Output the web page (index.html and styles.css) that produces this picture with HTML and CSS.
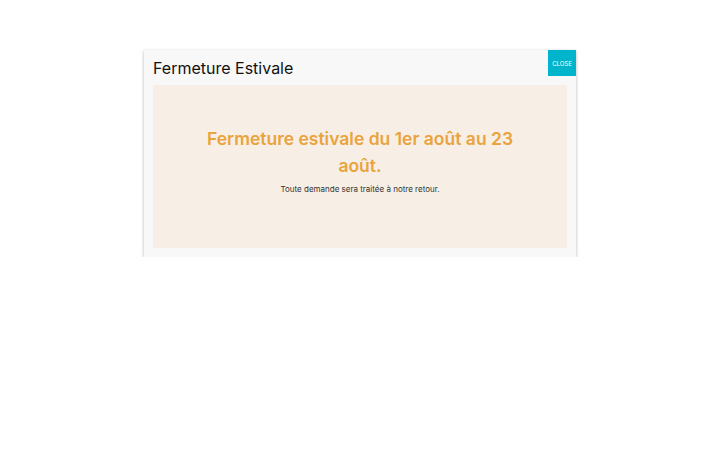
FILE: index.html
```html
<!DOCTYPE html>
<html lang="fr">
<head>
  <meta charset="UTF-8">
  <meta name="viewport" content="width=device-width, initial-scale=1.0">
  <title>Fermeture Estivale</title>
  <link rel="stylesheet" href="styles.css">
</head>
<body>
  <div class="modal">
    <div class="modal-header">
      <h3>Fermeture Estivale</h3>
      <button class="close" type="button">Close</button>
    </div>
    <div class="modal-body">
      <h2>Fermeture estivale du 1er août au 23 août.</h2>
      <p>Toute demande sera traitée à notre retour.</p>
    </div>
  </div>
</body>
</html>
```

FILE: styles.css
```css
:root {
  --orange: #e9a43e;
  --creme: #f7efe5;
  --teal: #00b4cc;
}

body {
  font-family: Inter, "Noto Sans", sans-serif;
  background: #fff;
  margin: 0;
  padding: 50px 0 0 144px;
}

.modal {
  width: 432px;
  background: #f8f8f8;
  box-shadow: 0 1px 3px rgba(0,0,0,0.3);
  padding: 0 9px 9px;
  box-sizing: border-box;
}

.modal-header {
  display: flex;
  justify-content: space-between;
  align-items: flex-start;
  margin-right: -9px;
  height: 35px;
}

.modal-header h3 {
  margin: 8px 0 0;
  font-size: 16px;
  line-height: 20px;
  font-weight: 400;
  color: #111;
}

.close {
  background: var(--teal);
  color: #fff;
  border: none;
  width: 28px;
  height: 26px;
  padding: 0;
  font-family: inherit;
  font-size: 6px;
  text-transform: uppercase;
}

.modal-body {
  background: var(--creme);
  height: 163px;
  box-sizing: border-box;
  padding: 40px 40px 0;
  text-align: center;
}

.modal-body h2 {
  margin: 0;
  font-size: 17.5px;
  line-height: 27px;
  font-weight: 600;
  color: var(--orange);
}

.modal-body p {
  margin: 5px 0 0;
  font-size: 8px;
  color: #333;
}
```
